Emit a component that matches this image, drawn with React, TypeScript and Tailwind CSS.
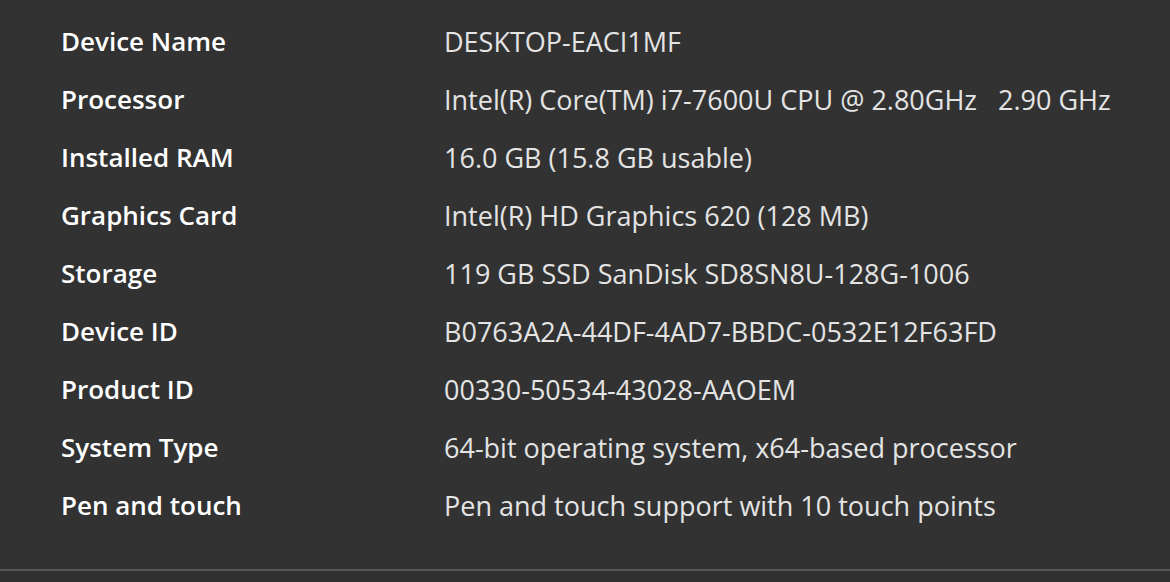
import React from "react";

const rows: [string, string][] = [
  ["Device Name", "DESKTOP-EACI1MF"],
  ["Processor", "Intel(R) Core(TM) i7-7600U CPU @ 2.80GHz   2.90 GHz"],
  ["Installed RAM", "16.0 GB (15.8 GB usable)"],
  ["Graphics Card", "Intel(R) HD Graphics 620 (128 MB)"],
  ["Storage", "119 GB SSD SanDisk SD8SN8U-128G-1006"],
  ["Device ID", "B0763A2A-44DF-4AD7-BBDC-0532E12F63FD"],
  ["Product ID", "00330-50534-43028-AAOEM"],
  ["System Type", "64-bit operating system, x64-based processor"],
  ["Pen and touch", "Pen and touch support with 10 touch points"],
];

export default function App() {
  return (
    <div
      className="w-[1170px] h-[582px] bg-[#323232] flex flex-col overflow-hidden"
      style={{ fontFamily: '"Open Sans", "Noto Sans", sans-serif' }}
    >
      <div className="flex-1 pt-[12px] pl-[61px]">
        {rows.map(([k, v]) => (
          <div key={k} className="grid grid-cols-[383px_1fr] h-[58px] items-center">
            <div className="text-[26px] font-semibold text-white leading-none">{k}</div>
            <div className="text-[27px] text-[#e4e4e4] whitespace-pre leading-none">{v}</div>
          </div>
        ))}
      </div>
      <div className="h-[2px] bg-[#575757]" />
      <div className="h-[11px] bg-[#2f2f2f]" />
    </div>
  );
}
